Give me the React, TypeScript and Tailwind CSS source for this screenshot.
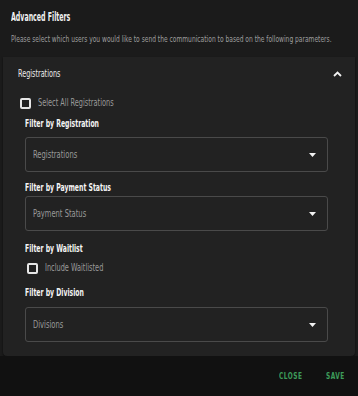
const font = { fontFamily: '"DejaVu Sans Condensed", "DejaVu Sans", sans-serif' };

function T({ children, className = "" }: { children: React.ReactNode; className?: string }) {
  return <span className={`block whitespace-nowrap origin-left font-stretch-condensed ${className}`}>{children}</span>;
}

function Checkbox({ label }: { label: string }) {
  return (
    <div className="flex items-center gap-[7px] h-[16px]">
      <span className="w-[11px] h-[11px] border-2 border-[#e6e6e6] rounded-[2px]" />
      <T className="text-[10px] leading-[16px] text-[#9a9a9a] scale-x-[0.73]">{label}</T>
    </div>
  );
}

function Select({ placeholder }: { placeholder: string }) {
  return (
    <div className="h-[35px] border border-[#4a4a4a] rounded-[3px] flex items-center justify-between pl-[7px] pr-[11px]">
      <T className="text-[10px] leading-[14px] text-[#9a9a9a] scale-x-[0.75]">{placeholder}</T>
      <svg width="7" height="4" viewBox="0 0 7 4">
        <path d="M0 0h7L3.5 4z" fill="#f2f2f2" />
      </svg>
    </div>
  );
}

function Label({ children }: { children: React.ReactNode }) {
  return (
    <div className="flex h-[14px]">
      <T className="text-[10.5px] leading-[14px] font-bold text-[#f4f4f4] scale-x-[0.65]">{children}</T>
    </div>
  );
}

export default function App() {
  return (
    <div className="w-[358px] h-[396px] bg-[#1b1b1b] flex flex-col overflow-hidden" style={font}>
      <div className="px-[11px] pt-[10px] h-[57px]">
        <div className="flex h-[14px]">
          <T className="text-[12px] leading-[14px] font-bold text-[#f0f0f0] scale-x-[0.58]">Advanced Filters</T>
        </div>
        <div className="flex mt-[9px] h-[12px]">
          <T className="text-[8.5px] leading-[12px] text-[#9e9e9e] scale-x-[0.78]">
            Please select which users you would like to send the communication to based on the following parameters.
          </T>
        </div>
      </div>
      <div className="mx-[3px] h-[299px] bg-[#222222] rounded-b-[4px] shadow-[0_1px_2px_rgba(0,0,0,0.6)] pl-[22px] pr-[27px]">
        <div className="flex items-center justify-between -ml-[7px] -mr-[14px] h-[34px]">
          <T className="text-[10px] leading-[14px] text-[#ececec] scale-x-[0.72]">Registrations</T>
          <svg width="9" height="6" viewBox="0 0 9 6">
            <path d="M1 5L4.5 1.5L8 5" stroke="#f2f2f2" strokeWidth="1.8" fill="none" />
          </svg>
        </div>
        <div className="-ml-[5px] mt-[4px]">
          <Checkbox label="Select All Registrations" />
        </div>
        <div className="mt-[5px]">
          <Label>Filter by Registration</Label>
        </div>
        <div className="mt-[7px]">
          <Select placeholder="Registrations" />
        </div>
        <div className="mt-[8px]">
          <Label>Filter by Payment Status</Label>
        </div>
        <div className="mt-[2px]">
          <Select placeholder="Payment Status" />
        </div>
        <div className="mt-[10px]">
          <Label>Filter by Waitlist</Label>
        </div>
        <div className="mt-[5px] pl-[2px]">
          <Checkbox label="Include Waitlisted" />
        </div>
        <div className="mt-[9px]">
          <Label>Filter by Division</Label>
        </div>
        <div className="mt-[8px]">
          <Select placeholder="Divisions" />
        </div>
      </div>
      <div className="flex-1 bg-[#111111] flex items-center justify-end gap-[24px] pr-[14px]">
        <button className="w-[23px] text-left">
          <T className="text-[9px] leading-[12px] font-bold tracking-[0.08em] text-[#3d9c5a] scale-x-[0.72]">CLOSE</T>
        </button>
        <button className="w-[18px] text-left">
          <T className="text-[9px] leading-[12px] font-bold tracking-[0.08em] text-[#3d9c5a] scale-x-[0.72]">SAVE</T>
        </button>
      </div>
    </div>
  );
}
